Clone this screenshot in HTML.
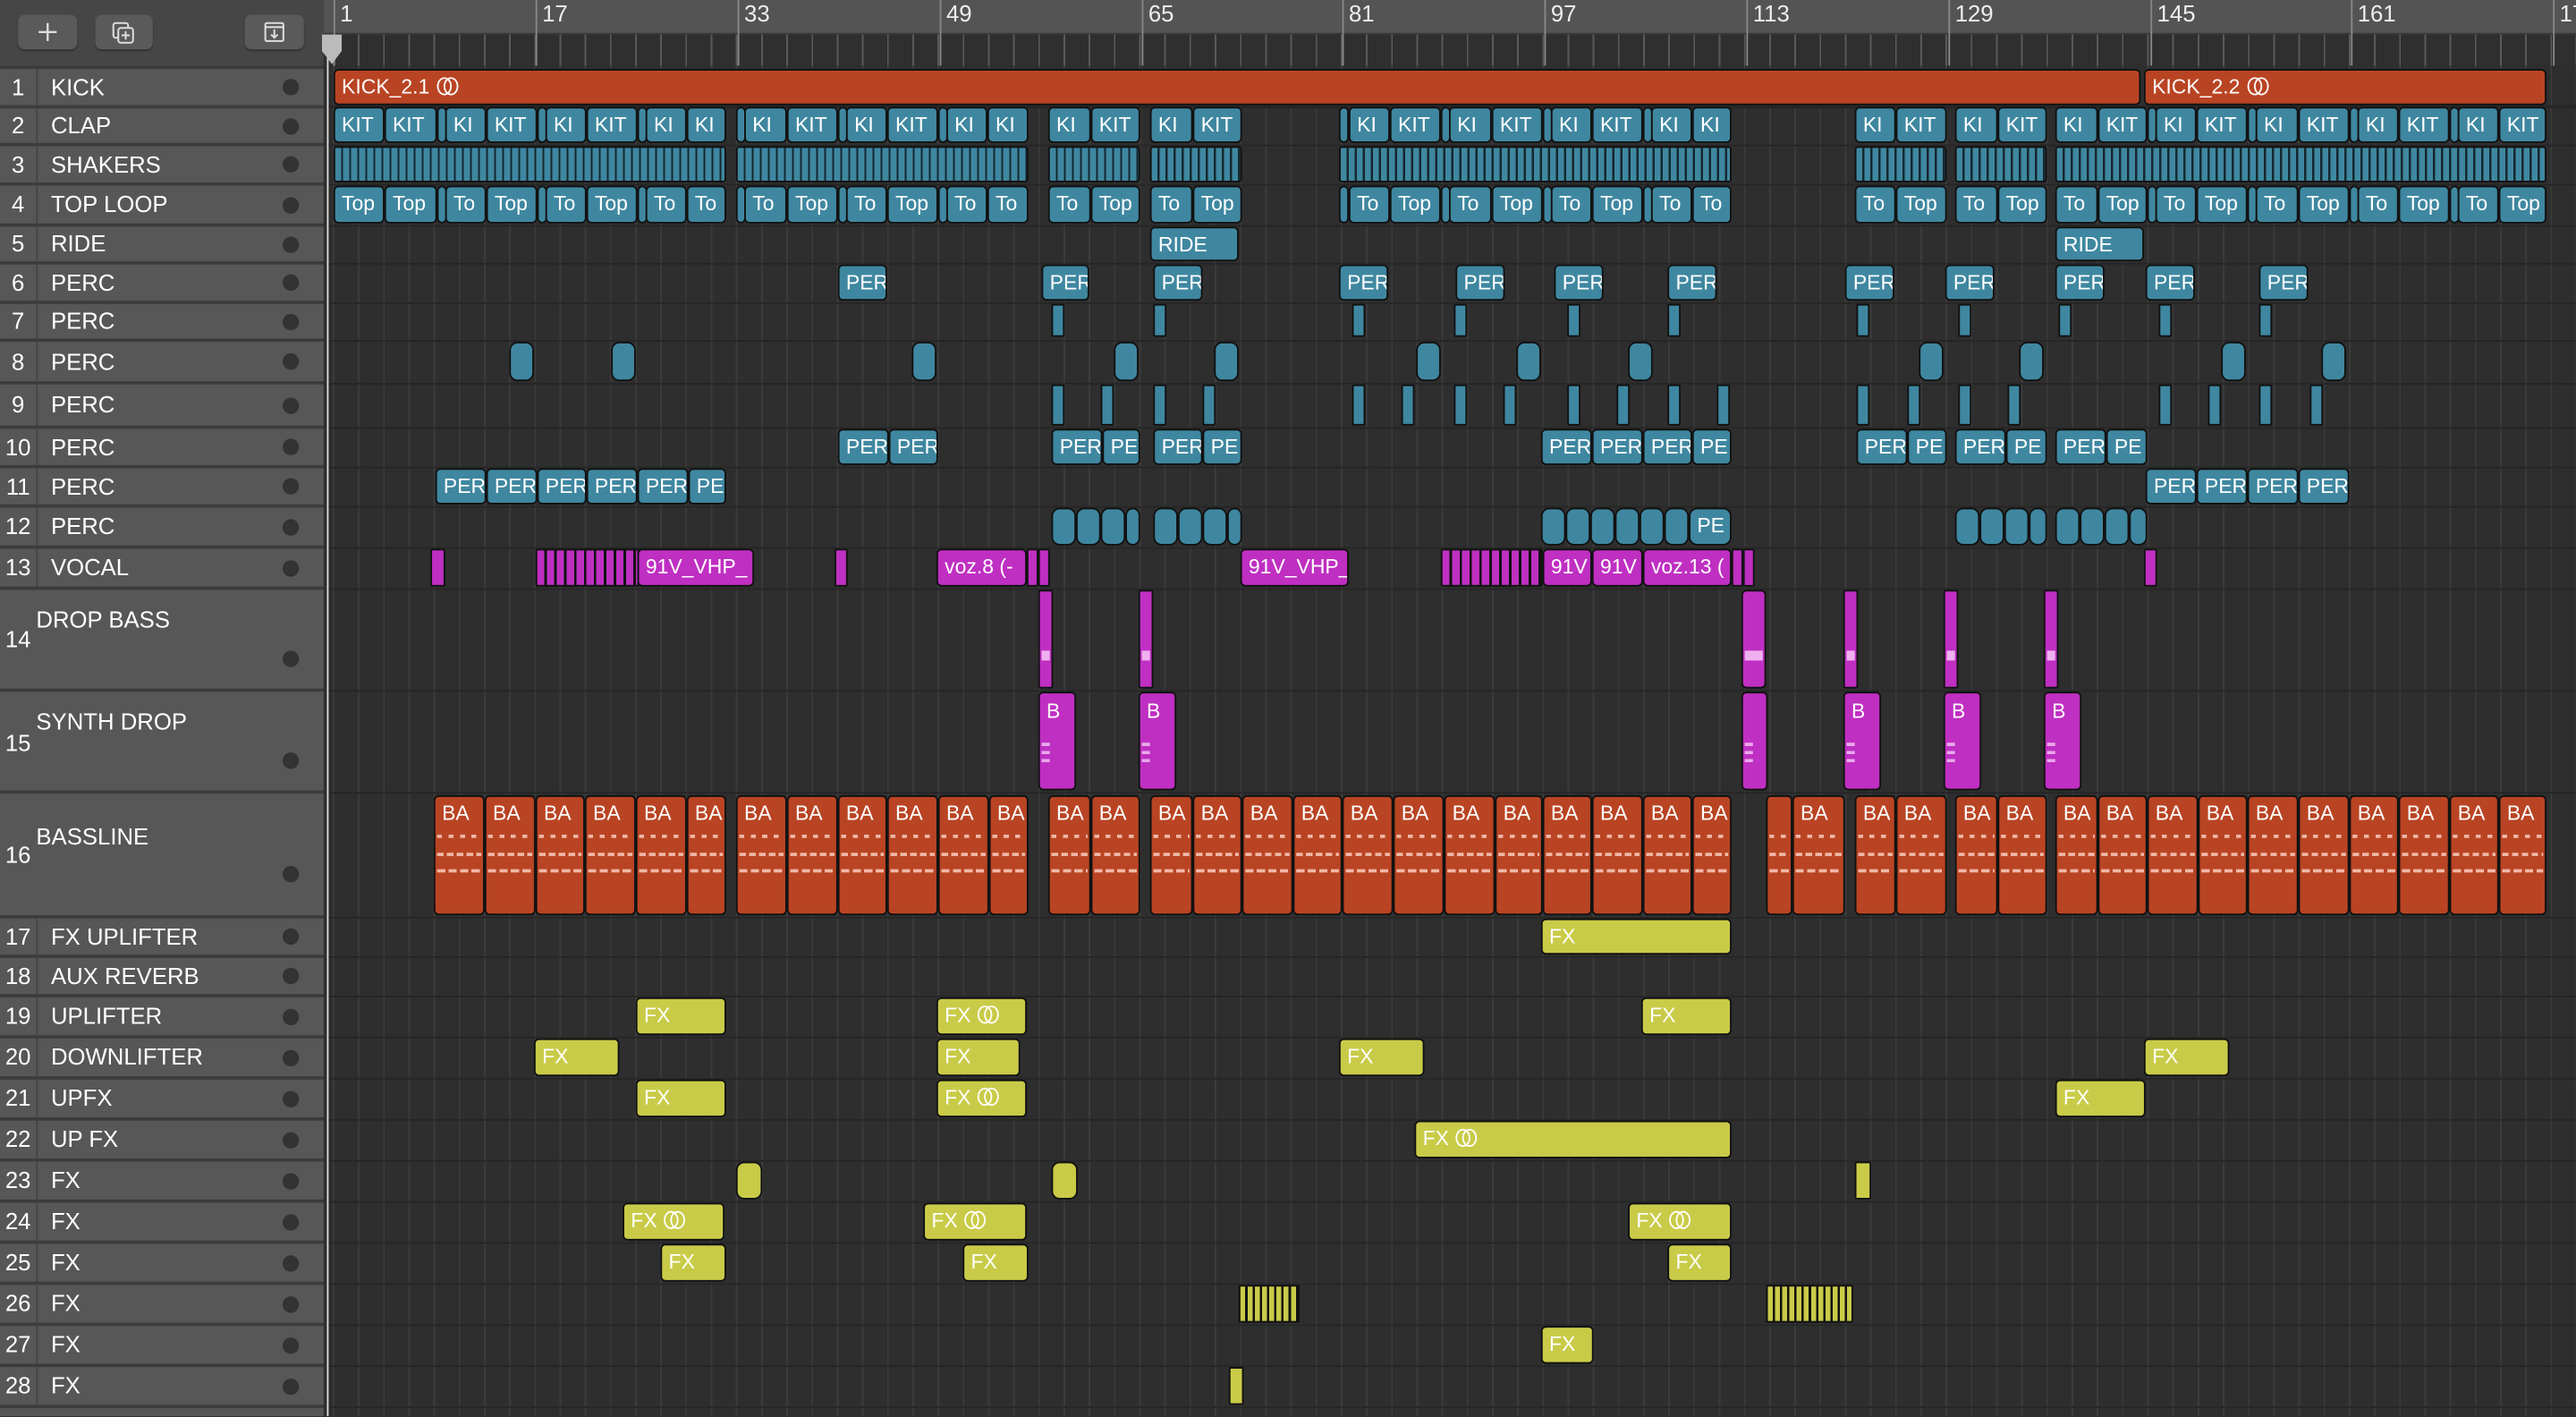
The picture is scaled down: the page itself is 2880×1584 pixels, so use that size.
<!DOCTYPE html>
<html><head><meta charset="utf-8"><style>
html,body{margin:0;padding:0;background:#2e2e2e;overflow:hidden;width:2880px;height:1584px}
#w{position:absolute;left:0;top:0;width:1568px;height:862px;transform:scale(1.83673);transform-origin:0 0;font-family:"Liberation Sans",sans-serif;color:#fff;overflow:hidden}
#hdr{position:absolute;left:0;top:0;width:197px;height:40px;background:#464646;border-bottom:1px solid #3a3a3a}
.btn{position:absolute;top:9px;height:21px;background:#5a5a5a;border-radius:4px;box-shadow:0 1px 1px #333}
#pan{position:absolute;left:0;top:41px;width:197px;height:821px;background:#3c3c3c}
.tr{position:absolute;left:0;width:197px;background:#575757;font-size:14px}
.tr .n{position:absolute;left:0;width:22px;text-align:center;border-right:1.5px solid #444;height:100%}
.tr .nm{position:absolute;left:31px}
.tr .d{position:absolute;left:172px;width:10px;height:10px;border-radius:50%;background:#333}
#ar{position:absolute;left:199px;top:40px;width:1369px;height:822px;background-color:#2e2e2e;background-image:repeating-linear-gradient(90deg,transparent 0 3.5px,#3b3b3b 3.5px 4.5px,transparent 4.5px 15.34px)}
#rul{position:absolute;left:197px;top:0;width:1371px;height:20px;background:#545454;border-bottom:1.5px solid #3a3a3a}
#rul2{position:absolute;left:197px;top:21px;width:1371px;height:19px;background-color:#2f2f2f;background-image:repeating-linear-gradient(90deg,transparent 0 5.5px,#5a5a5a 5.5px 6.5px,transparent 6.5px 15.34px)}
.bn{position:absolute;top:0;height:40px;border-left:1px solid #888;font-size:14px;padding-left:3px;line-height:17px;color:#eee}
.rl{position:absolute;left:199px;width:1369px;height:1.5px;background:#262626}
.r{position:absolute;box-sizing:border-box;border:1px solid #111;border-radius:3px;font-size:12.5px;padding-left:4px;line-height:20px;white-space:nowrap;overflow:hidden}
.b{background:#3f87a0}.o{background:#b94423}.m{background:#bf2fc2}.y{background:#c9cb48}
.st{background-image:repeating-linear-gradient(90deg,#3f87a0 0 3.6px,#152830 3.6px 4.9px)}
.stm{background:repeating-linear-gradient(90deg,#bf2fc2 0 4.4px,#111 4.4px 6px)}
.sty{background:repeating-linear-gradient(90deg,#c9cb48 0 3px,#111 3px 4.4px)}
.t1{top:42px;height:22px}.t2{top:65px;height:22px}.t3{top:89px;height:22px}.t4{top:113px;height:23px}.t5{top:138px;height:21px}.t6{top:161px;height:22px}.t7{top:185px;height:20px}.t8{top:208px;height:24px;border-radius:5px}.t9{top:234px;height:25px}.t10{top:261px;height:22px}.t11{top:285px;height:22px}.t12{top:309px;height:23px;border-radius:5px}.t13{top:334px;height:23px}.t14{top:359px;height:60px}.t15{top:421px;height:60px;line-height:22px}.t16{top:484px;height:73px;line-height:20px}.t17{top:559px;height:22px}.t19{top:607px;height:23px}.t20{top:632px;height:23px}.t21{top:657px;height:23px}.t22{top:682px;height:23px}.t23{top:707px;height:23px}.t24{top:732px;height:23px}.t25{top:757px;height:23px}.t26{top:782px;height:23px}.t27{top:807px;height:23px}.t28{top:832px;height:23px}
.lk{display:inline-block;position:relative;width:14px;height:11px;vertical-align:-1px;margin-left:4px}
.lk::before,.lk::after{content:"";position:absolute;top:0;width:7px;height:9px;border:1.2px solid #fff;border-radius:50%}
.lk::before{left:0}.lk::after{left:4px}
.ba::before,.ba::after{content:"";position:absolute;left:1px;right:1px;height:2px;background:repeating-linear-gradient(90deg,#f0b8a8 0 5px,transparent 5px 7px)}
.ba::before{top:23px;height:1.5px;background:repeating-linear-gradient(90deg,#f0b8a8 0 3px,transparent 3px 7px)}
.ba::after{top:44px}
.ba{background-image:linear-gradient(90deg,transparent 1px,transparent 1px);}
.ba span{position:absolute;left:1px;right:1px;top:34px;height:2px;background:repeating-linear-gradient(90deg,#f0b8a8 0 4px,transparent 4px 6px)}
.pk::after{content:"";position:absolute;left:1px;right:1px;top:36px;height:6px;background:#f0b0f0}
.bd::after{content:"";position:absolute;left:1px;width:5px;top:30px;height:14px;background:repeating-linear-gradient(#e8a8ea 0 2px,transparent 2px 5px)}
</style></head><body><div id="w">
<div id="hdr">
<div class="btn" style="left:11px;width:36px"><svg width="36" height="21"><path d="M18 5v11M12.5 10.5h11" stroke="#ddd" stroke-width="1.3"/></svg></div>
<div class="btn" style="left:58px;width:35px"><svg width="35" height="21"><rect x="11" y="5" width="9" height="9" rx="1.5" fill="none" stroke="#ddd" stroke-width="1.1"/><rect x="14" y="8" width="9" height="9" rx="1.5" fill="#5a5a5a" stroke="#ddd" stroke-width="1.1"/><path d="M18.5 10v5M16 12.5h5" stroke="#ddd" stroke-width="1.1"/></svg></div>
<div class="btn" style="left:149px;width:36px"><svg width="36" height="21"><rect x="12.5" y="5" width="11" height="11" rx="1" fill="none" stroke="#ddd" stroke-width="1.1"/><path d="M12.5 7.5h11M18 9v5M16 12l2 2 2-2" fill="none" stroke="#ddd" stroke-width="1.1"/></svg></div>
</div>
<div id="rul"></div><div id="rul2"></div>
<div class="bn" style="left:203px">1</div><div class="bn" style="left:326px">17</div><div class="bn" style="left:449px">33</div><div class="bn" style="left:572px">49</div><div class="bn" style="left:695px">65</div><div class="bn" style="left:817px">81</div><div class="bn" style="left:940px">97</div><div class="bn" style="left:1063px">113</div><div class="bn" style="left:1186px">129</div><div class="bn" style="left:1309px">145</div><div class="bn" style="left:1431px">161</div><div class="bn" style="left:1554px">17</div>
<div id="pan"></div>
<div class="tr" style="top:42px;height:22px;line-height:22px"><span class="n">1</span><span class="nm">KICK</span><span class="d" style="top:6px"></span></div>
<div class="tr" style="top:66px;height:21px;line-height:21px"><span class="n">2</span><span class="nm">CLAP</span><span class="d" style="top:6px"></span></div>
<div class="tr" style="top:89px;height:22px;line-height:22px"><span class="n">3</span><span class="nm">SHAKERS</span><span class="d" style="top:6px"></span></div>
<div class="tr" style="top:113px;height:23px;line-height:23px"><span class="n">4</span><span class="nm">TOP LOOP</span><span class="d" style="top:7px"></span></div>
<div class="tr" style="top:138px;height:21px;line-height:21px"><span class="n">5</span><span class="nm">RIDE</span><span class="d" style="top:6px"></span></div>
<div class="tr" style="top:161px;height:22px;line-height:22px"><span class="n">6</span><span class="nm">PERC</span><span class="d" style="top:6px"></span></div>
<div class="tr" style="top:185px;height:21px;line-height:21px"><span class="n">7</span><span class="nm">PERC</span><span class="d" style="top:6px"></span></div>
<div class="tr" style="top:208px;height:24px;line-height:24px"><span class="n">8</span><span class="nm">PERC</span><span class="d" style="top:7px"></span></div>
<div class="tr" style="top:234px;height:25px;line-height:25px"><span class="n">9</span><span class="nm">PERC</span><span class="d" style="top:8px"></span></div>
<div class="tr" style="top:261px;height:22px;line-height:22px"><span class="n">10</span><span class="nm">PERC</span><span class="d" style="top:6px"></span></div>
<div class="tr" style="top:285px;height:22px;line-height:22px"><span class="n">11</span><span class="nm">PERC</span><span class="d" style="top:6px"></span></div>
<div class="tr" style="top:309px;height:23px;line-height:23px"><span class="n">12</span><span class="nm">PERC</span><span class="d" style="top:7px"></span></div>
<div class="tr" style="top:334px;height:23px;line-height:23px"><span class="n">13</span><span class="nm">VOCAL</span><span class="d" style="top:7px"></span></div>
<div class="tr" style="top:359px;height:60px"><span class="n" style="line-height:60px;border:0">14</span><span class="nm" style="left:22px;top:10px">DROP BASS</span><span class="d" style="top:37px"></span></div>
<div class="tr" style="top:421px;height:60px"><span class="n" style="line-height:62px;border:0">15</span><span class="nm" style="left:22px;top:10px">SYNTH DROP</span><span class="d" style="top:37px"></span></div>
<div class="tr" style="top:483px;height:74px"><span class="n" style="line-height:74px;border:0">16</span><span class="nm" style="left:22px;top:18px">BASSLINE</span><span class="d" style="top:44px"></span></div>
<div class="tr" style="top:559px;height:22px;line-height:22px"><span class="n">17</span><span class="nm">FX UPLIFTER</span><span class="d" style="top:6px"></span></div>
<div class="tr" style="top:583px;height:22px;line-height:22px"><span class="n">18</span><span class="nm">AUX REVERB</span><span class="d" style="top:6px"></span></div>
<div class="tr" style="top:607px;height:23px;line-height:23px"><span class="n">19</span><span class="nm">UPLIFTER</span><span class="d" style="top:7px"></span></div>
<div class="tr" style="top:632px;height:23px;line-height:23px"><span class="n">20</span><span class="nm">DOWNLIFTER</span><span class="d" style="top:7px"></span></div>
<div class="tr" style="top:657px;height:23px;line-height:23px"><span class="n">21</span><span class="nm">UPFX</span><span class="d" style="top:7px"></span></div>
<div class="tr" style="top:682px;height:23px;line-height:23px"><span class="n">22</span><span class="nm">UP FX</span><span class="d" style="top:7px"></span></div>
<div class="tr" style="top:707px;height:23px;line-height:23px"><span class="n">23</span><span class="nm">FX</span><span class="d" style="top:7px"></span></div>
<div class="tr" style="top:732px;height:23px;line-height:23px"><span class="n">24</span><span class="nm">FX</span><span class="d" style="top:7px"></span></div>
<div class="tr" style="top:757px;height:23px;line-height:23px"><span class="n">25</span><span class="nm">FX</span><span class="d" style="top:7px"></span></div>
<div class="tr" style="top:782px;height:23px;line-height:23px"><span class="n">26</span><span class="nm">FX</span><span class="d" style="top:7px"></span></div>
<div class="tr" style="top:807px;height:23px;line-height:23px"><span class="n">27</span><span class="nm">FX</span><span class="d" style="top:7px"></span></div>
<div class="tr" style="top:832px;height:23px;line-height:23px"><span class="n">28</span><span class="nm">FX</span><span class="d" style="top:7px"></span></div>
<div class="tr" style="top:857px;height:5px"></div>
<div id="ar"></div>
<div class="rl" style="top:64px"></div><div class="rl" style="top:87.5px"></div><div class="rl" style="top:111.5px"></div><div class="rl" style="top:136.5px"></div><div class="rl" style="top:159.5px"></div><div class="rl" style="top:183.5px"></div><div class="rl" style="top:206.5px"></div><div class="rl" style="top:232.5px"></div><div class="rl" style="top:259.5px"></div><div class="rl" style="top:283.5px"></div><div class="rl" style="top:307.5px"></div><div class="rl" style="top:332.5px"></div><div class="rl" style="top:357.5px"></div><div class="rl" style="top:419.5px"></div><div class="rl" style="top:481.5px"></div><div class="rl" style="top:557.5px"></div><div class="rl" style="top:581.5px"></div><div class="rl" style="top:605.5px"></div><div class="rl" style="top:630.5px"></div><div class="rl" style="top:655.5px"></div><div class="rl" style="top:680.5px"></div><div class="rl" style="top:705.5px"></div><div class="rl" style="top:730.5px"></div><div class="rl" style="top:755.5px"></div><div class="rl" style="top:780.5px"></div><div class="rl" style="top:805.5px"></div><div class="rl" style="top:830.5px"></div><div class="rl" style="top:855.5px"></div>
<div style="position:absolute;left:199px;top:22px;width:1px;height:840px;background:#ddd"></div>
<svg style="position:absolute;left:195px;top:20px" width="16" height="20"><path d="M1 1h12v10l-6 8-6-8z" fill="#bbb"/></svg>

<div class="r o t1" style="left:203px;width:1100px">KICK_2.1<span class="lk"></span></div>
<div class="r o t1" style="left:1305px;width:245px">KICK_2.2<span class="lk"></span></div>

<div class="r b t2" style="left:203px;width:31px">KIT</div><div class="r b t2" style="left:234px;width:32px">KIT</div><div class="r b t2" style="left:266px;width:6px"></div><div class="r b t2" style="left:271px;width:25px">KI</div><div class="r b t2" style="left:296px;width:31px">KIT</div><div class="r b t2" style="left:327px;width:6px"></div><div class="r b t2" style="left:332px;width:25px">KI</div><div class="r b t2" style="left:357px;width:31px">KIT</div><div class="r b t2" style="left:388px;width:6px"></div><div class="r b t2" style="left:393px;width:25px">KI</div><div class="r b t2" style="left:418px;width:24px">KI</div>
<div class="r b t2" style="left:448px;width:6px"></div><div class="r b t2" style="left:453px;width:26px">KI</div><div class="r b t2" style="left:479px;width:31px">KIT</div><div class="r b t2" style="left:510px;width:6px"></div><div class="r b t2" style="left:515px;width:25px">KI</div><div class="r b t2" style="left:540px;width:31px">KIT</div><div class="r b t2" style="left:571px;width:6px"></div><div class="r b t2" style="left:576px;width:25px">KI</div><div class="r b t2" style="left:601px;width:25px">KI</div>
<div class="r b t2" style="left:638px;width:26px">KI</div><div class="r b t2" style="left:664px;width:30px">KIT</div>
<div class="r b t2" style="left:700px;width:26px">KI</div><div class="r b t2" style="left:726px;width:30px">KIT</div>
<div class="r b t2" style="left:815px;width:6px"></div><div class="r b t2" style="left:821px;width:25px">KI</div><div class="r b t2" style="left:846px;width:31px">KIT</div><div class="r b t2" style="left:877px;width:6px"></div><div class="r b t2" style="left:882px;width:26px">KI</div><div class="r b t2" style="left:908px;width:31px">KIT</div><div class="r b t2" style="left:939px;width:6px"></div><div class="r b t2" style="left:944px;width:25px">KI</div><div class="r b t2" style="left:969px;width:31px">KIT</div><div class="r b t2" style="left:1000px;width:6px"></div><div class="r b t2" style="left:1005px;width:25px">KI</div><div class="r b t2" style="left:1030px;width:24px">KI</div>
<div class="r b t2" style="left:1129px;width:25px">KI</div><div class="r b t2" style="left:1154px;width:31px">KIT</div>
<div class="r b t2" style="left:1190px;width:26px">KI</div><div class="r b t2" style="left:1216px;width:30px">KIT</div>
<div class="r b t2" style="left:1251px;width:26px">KI</div><div class="r b t2" style="left:1277px;width:30px">KIT</div><div class="r b t2" style="left:1307px;width:6px"></div><div class="r b t2" style="left:1312px;width:25px">KI</div><div class="r b t2" style="left:1337px;width:31px">KIT</div><div class="r b t2" style="left:1368px;width:6px"></div><div class="r b t2" style="left:1373px;width:26px">KI</div><div class="r b t2" style="left:1399px;width:31px">KIT</div><div class="r b t2" style="left:1430px;width:6px"></div><div class="r b t2" style="left:1435px;width:25px">KI</div><div class="r b t2" style="left:1460px;width:31px">KIT</div><div class="r b t2" style="left:1491px;width:6px"></div><div class="r b t2" style="left:1496px;width:25px">KI</div><div class="r b t2" style="left:1521px;width:29px">KIT</div>

<div class="r st t3" style="left:203px;width:239px;border-radius:2px"></div><div class="r st t3" style="left:448px;width:178px;border-radius:2px"></div><div class="r st t3" style="left:638px;width:56px;border-radius:2px"></div><div class="r st t3" style="left:700px;width:56px;border-radius:2px"></div><div class="r st t3" style="left:815px;width:239px;border-radius:2px"></div><div class="r st t3" style="left:1129px;width:56px;border-radius:2px"></div><div class="r st t3" style="left:1190px;width:56px;border-radius:2px"></div><div class="r st t3" style="left:1251px;width:299px;border-radius:2px"></div>

<div class="r b t4" style="left:203px;width:31px">Top</div><div class="r b t4" style="left:234px;width:32px">Top</div><div class="r b t4" style="left:266px;width:6px"></div><div class="r b t4" style="left:271px;width:25px">To</div><div class="r b t4" style="left:296px;width:31px">Top</div><div class="r b t4" style="left:327px;width:6px"></div><div class="r b t4" style="left:332px;width:25px">To</div><div class="r b t4" style="left:357px;width:31px">Top</div><div class="r b t4" style="left:388px;width:6px"></div><div class="r b t4" style="left:393px;width:25px">To</div><div class="r b t4" style="left:418px;width:24px">To</div>
<div class="r b t4" style="left:448px;width:6px"></div><div class="r b t4" style="left:453px;width:26px">To</div><div class="r b t4" style="left:479px;width:31px">Top</div><div class="r b t4" style="left:510px;width:6px"></div><div class="r b t4" style="left:515px;width:25px">To</div><div class="r b t4" style="left:540px;width:31px">Top</div><div class="r b t4" style="left:571px;width:6px"></div><div class="r b t4" style="left:576px;width:25px">To</div><div class="r b t4" style="left:601px;width:25px">To</div>
<div class="r b t4" style="left:638px;width:26px">To</div><div class="r b t4" style="left:664px;width:30px">Top</div>
<div class="r b t4" style="left:700px;width:26px">To</div><div class="r b t4" style="left:726px;width:30px">Top</div>
<div class="r b t4" style="left:815px;width:6px"></div><div class="r b t4" style="left:821px;width:25px">To</div><div class="r b t4" style="left:846px;width:31px">Top</div><div class="r b t4" style="left:877px;width:6px"></div><div class="r b t4" style="left:882px;width:26px">To</div><div class="r b t4" style="left:908px;width:31px">Top</div><div class="r b t4" style="left:939px;width:6px"></div><div class="r b t4" style="left:944px;width:25px">To</div><div class="r b t4" style="left:969px;width:31px">Top</div><div class="r b t4" style="left:1000px;width:6px"></div><div class="r b t4" style="left:1005px;width:25px">To</div><div class="r b t4" style="left:1030px;width:24px">To</div>
<div class="r b t4" style="left:1129px;width:25px">To</div><div class="r b t4" style="left:1154px;width:31px">Top</div>
<div class="r b t4" style="left:1190px;width:26px">To</div><div class="r b t4" style="left:1216px;width:30px">Top</div>
<div class="r b t4" style="left:1251px;width:26px">To</div><div class="r b t4" style="left:1277px;width:30px">Top</div><div class="r b t4" style="left:1307px;width:6px"></div><div class="r b t4" style="left:1312px;width:25px">To</div><div class="r b t4" style="left:1337px;width:31px">Top</div><div class="r b t4" style="left:1368px;width:6px"></div><div class="r b t4" style="left:1373px;width:26px">To</div><div class="r b t4" style="left:1399px;width:31px">Top</div><div class="r b t4" style="left:1430px;width:6px"></div><div class="r b t4" style="left:1435px;width:25px">To</div><div class="r b t4" style="left:1460px;width:31px">Top</div><div class="r b t4" style="left:1491px;width:6px"></div><div class="r b t4" style="left:1496px;width:25px">To</div><div class="r b t4" style="left:1521px;width:29px">Top</div>

<div class="r b t5" style="left:700px;width:54px">RIDE</div><div class="r b t5" style="left:1251px;width:54px">RIDE</div>

<div class="r b t6" style="left:510px;width:30px">PER</div><div class="r b t6" style="left:634px;width:29px">PER</div><div class="r b t6" style="left:702px;width:30px">PER</div><div class="r b t6" style="left:815px;width:30px">PER</div><div class="r b t6" style="left:886px;width:30px">PER</div><div class="r b t6" style="left:946px;width:30px">PER</div><div class="r b t6" style="left:1015px;width:30px">PER</div><div class="r b t6" style="left:1123px;width:30px">PER</div><div class="r b t6" style="left:1184px;width:30px">PER</div><div class="r b t6" style="left:1251px;width:30px">PER</div><div class="r b t6" style="left:1306px;width:30px">PER</div><div class="r b t6" style="left:1375px;width:30px">PER</div>

<div class="r b t7" style="left:640px;width:8px;border-radius:1px"></div><div class="r b t7" style="left:702px;width:8px;border-radius:1px"></div><div class="r b t7" style="left:823px;width:8px;border-radius:1px"></div><div class="r b t7" style="left:885px;width:8px;border-radius:1px"></div><div class="r b t7" style="left:954px;width:8px;border-radius:1px"></div><div class="r b t7" style="left:1015px;width:8px;border-radius:1px"></div><div class="r b t7" style="left:1130px;width:8px;border-radius:1px"></div><div class="r b t7" style="left:1192px;width:8px;border-radius:1px"></div><div class="r b t7" style="left:1253px;width:8px;border-radius:1px"></div><div class="r b t7" style="left:1314px;width:8px;border-radius:1px"></div><div class="r b t7" style="left:1375px;width:8px;border-radius:1px"></div>

<div class="r b t8" style="left:310px;width:15px"></div><div class="r b t8" style="left:372px;width:15px"></div><div class="r b t8" style="left:555px;width:15px"></div><div class="r b t8" style="left:678px;width:15px"></div><div class="r b t8" style="left:739px;width:15px"></div><div class="r b t8" style="left:862px;width:15px"></div><div class="r b t8" style="left:923px;width:15px"></div><div class="r b t8" style="left:991px;width:15px"></div><div class="r b t8" style="left:1168px;width:15px"></div><div class="r b t8" style="left:1229px;width:15px"></div><div class="r b t8" style="left:1352px;width:15px"></div><div class="r b t8" style="left:1413px;width:15px"></div>

<div class="r b t9" style="left:640px;width:8px;border-radius:1px"></div><div class="r b t9" style="left:670px;width:8px;border-radius:1px"></div><div class="r b t9" style="left:702px;width:8px;border-radius:1px"></div><div class="r b t9" style="left:732px;width:8px;border-radius:1px"></div><div class="r b t9" style="left:823px;width:8px;border-radius:1px"></div><div class="r b t9" style="left:853px;width:8px;border-radius:1px"></div><div class="r b t9" style="left:885px;width:8px;border-radius:1px"></div><div class="r b t9" style="left:915px;width:8px;border-radius:1px"></div><div class="r b t9" style="left:954px;width:8px;border-radius:1px"></div><div class="r b t9" style="left:984px;width:8px;border-radius:1px"></div><div class="r b t9" style="left:1015px;width:8px;border-radius:1px"></div><div class="r b t9" style="left:1045px;width:8px;border-radius:1px"></div><div class="r b t9" style="left:1130px;width:8px;border-radius:1px"></div><div class="r b t9" style="left:1161px;width:8px;border-radius:1px"></div><div class="r b t9" style="left:1192px;width:8px;border-radius:1px"></div><div class="r b t9" style="left:1222px;width:8px;border-radius:1px"></div><div class="r b t9" style="left:1314px;width:8px;border-radius:1px"></div><div class="r b t9" style="left:1344px;width:8px;border-radius:1px"></div><div class="r b t9" style="left:1375px;width:8px;border-radius:1px"></div><div class="r b t9" style="left:1406px;width:8px;border-radius:1px"></div>

<div class="r b t10" style="left:510px;width:31px">PER</div><div class="r b t10" style="left:541px;width:30px">PER</div><div class="r b t10" style="left:640px;width:31px">PER</div><div class="r b t10" style="left:671px;width:23px">PE</div><div class="r b t10" style="left:702px;width:30px">PER</div><div class="r b t10" style="left:732px;width:24px">PE</div><div class="r b t10" style="left:938px;width:31px">PER</div><div class="r b t10" style="left:969px;width:31px">PER</div><div class="r b t10" style="left:1000px;width:30px">PER</div><div class="r b t10" style="left:1030px;width:24px">PE</div><div class="r b t10" style="left:1130px;width:31px">PER</div><div class="r b t10" style="left:1161px;width:24px">PE</div><div class="r b t10" style="left:1190px;width:31px">PER</div><div class="r b t10" style="left:1221px;width:25px">PE</div><div class="r b t10" style="left:1251px;width:31px">PER</div><div class="r b t10" style="left:1282px;width:25px">PE</div>

<div class="r b t11" style="left:265px;width:31px">PER</div><div class="r b t11" style="left:296px;width:31px">PER</div><div class="r b t11" style="left:327px;width:30px">PER</div><div class="r b t11" style="left:357px;width:31px">PER</div><div class="r b t11" style="left:388px;width:31px">PER</div><div class="r b t11" style="left:419px;width:23px">PE</div><div class="r b t11" style="left:1306px;width:31px">PER</div><div class="r b t11" style="left:1337px;width:31px">PER</div><div class="r b t11" style="left:1368px;width:31px">PER</div><div class="r b t11" style="left:1399px;width:31px">PER</div>

<div class="r b t12" style="left:640px;width:15px"></div><div class="r b t12" style="left:655px;width:15px"></div><div class="r b t12" style="left:670px;width:15px"></div><div class="r b t12" style="left:685px;width:9px"></div><div class="r b t12" style="left:702px;width:15px"></div><div class="r b t12" style="left:717px;width:15px"></div><div class="r b t12" style="left:732px;width:15px"></div><div class="r b t12" style="left:747px;width:9px"></div><div class="r b t12" style="left:938px;width:15px"></div><div class="r b t12" style="left:953px;width:15px"></div><div class="r b t12" style="left:968px;width:15px"></div><div class="r b t12" style="left:983px;width:15px"></div><div class="r b t12" style="left:998px;width:15px"></div><div class="r b t12" style="left:1013px;width:15px"></div><div class="r b t12" style="left:1028px;width:26px;line-height:21px">PE</div><div class="r b t12" style="left:1190px;width:15px"></div><div class="r b t12" style="left:1205px;width:15px"></div><div class="r b t12" style="left:1220px;width:15px"></div><div class="r b t12" style="left:1235px;width:11px"></div><div class="r b t12" style="left:1251px;width:15px"></div><div class="r b t12" style="left:1266px;width:15px"></div><div class="r b t12" style="left:1281px;width:15px"></div><div class="r b t12" style="left:1296px;width:11px"></div>

<div class="r m t13" style="left:262px;width:9px;border-radius:1px"></div><div class="r stm t13" style="left:326px;width:63px;border-radius:1px"></div><div class="r m t13" style="left:388px;width:71px">91V_VHP_</div><div class="r m t13" style="left:508px;width:8px;border-radius:1px"></div><div class="r m t13" style="left:570px;width:55px">voz.8 (-</div><div class="r m t13" style="left:625px;width:7px;border-radius:1px"></div><div class="r m t13" style="left:632px;width:7px;border-radius:1px"></div><div class="r m t13" style="left:755px;width:66px">91V_VHP_</div><div class="r stm t13" style="left:877px;width:62px;border-radius:1px"></div><div class="r m t13" style="left:939px;width:30px">91V</div><div class="r m t13" style="left:969px;width:31px">91V</div><div class="r m t13" style="left:1000px;width:54px">voz.13 (</div><div class="r m t13" style="left:1054px;width:7px;border-radius:1px"></div><div class="r m t13" style="left:1061px;width:7px;border-radius:1px"></div><div class="r m t13" style="left:1305px;width:8px;border-radius:1px"></div>

<div class="r m t14 pk" style="left:632px;width:9px;border-radius:1px"></div><div class="r m t14 pk" style="left:693px;width:9px;border-radius:1px"></div><div class="r m t14 pk" style="left:1060px;width:15px"></div><div class="r m t14 pk" style="left:1122px;width:9px;border-radius:1px"></div><div class="r m t14 pk" style="left:1183px;width:9px;border-radius:1px"></div><div class="r m t14 pk" style="left:1244px;width:9px;border-radius:1px"></div>

<div class="r m t15 bd" style="left:632px;width:23px">B</div><div class="r m t15 bd" style="left:693px;width:23px">B</div><div class="r m t15 bd" style="left:1060px;width:16px"></div><div class="r m t15 bd" style="left:1122px;width:23px">B</div><div class="r m t15 bd" style="left:1183px;width:23px">B</div><div class="r m t15 bd" style="left:1244px;width:23px">B</div>

<div class="r o t16 ba" style="left:264px;width:31px">BA<span></span></div><div class="r o t16 ba" style="left:295px;width:31px">BA<span></span></div><div class="r o t16 ba" style="left:326px;width:30px">BA<span></span></div><div class="r o t16 ba" style="left:356px;width:31px">BA<span></span></div><div class="r o t16 ba" style="left:387px;width:31px">BA<span></span></div><div class="r o t16 ba" style="left:418px;width:24px">BA<span></span></div>
<div class="r o t16 ba" style="left:448px;width:31px">BA<span></span></div><div class="r o t16 ba" style="left:479px;width:31px">BA<span></span></div><div class="r o t16 ba" style="left:510px;width:30px">BA<span></span></div><div class="r o t16 ba" style="left:540px;width:31px">BA<span></span></div><div class="r o t16 ba" style="left:571px;width:31px">BA<span></span></div><div class="r o t16 ba" style="left:602px;width:24px">BA<span></span></div>
<div class="r o t16 ba" style="left:638px;width:26px">BA<span></span></div><div class="r o t16 ba" style="left:664px;width:30px">BA<span></span></div>
<div class="r o t16 ba" style="left:700px;width:26px">BA<span></span></div><div class="r o t16 ba" style="left:726px;width:30px">BA<span></span></div><div class="r o t16 ba" style="left:756px;width:31px">BA<span></span></div><div class="r o t16 ba" style="left:787px;width:30px">BA<span></span></div><div class="r o t16 ba" style="left:817px;width:31px">BA<span></span></div><div class="r o t16 ba" style="left:848px;width:31px">BA<span></span></div><div class="r o t16 ba" style="left:879px;width:31px">BA<span></span></div><div class="r o t16 ba" style="left:910px;width:29px">BA<span></span></div><div class="r o t16 ba" style="left:939px;width:30px">BA<span></span></div><div class="r o t16 ba" style="left:969px;width:31px">BA<span></span></div><div class="r o t16 ba" style="left:1000px;width:30px">BA<span></span></div><div class="r o t16 ba" style="left:1030px;width:24px">BA<span></span></div>
<div class="r o t16 ba" style="left:1075px;width:16px"><span></span></div><div class="r o t16 ba" style="left:1091px;width:32px">BA<span></span></div>
<div class="r o t16 ba" style="left:1129px;width:25px">BA<span></span></div><div class="r o t16 ba" style="left:1154px;width:31px">BA<span></span></div>
<div class="r o t16 ba" style="left:1190px;width:26px">BA<span></span></div><div class="r o t16 ba" style="left:1216px;width:30px">BA<span></span></div>
<div class="r o t16 ba" style="left:1251px;width:26px">BA<span></span></div><div class="r o t16 ba" style="left:1277px;width:30px">BA<span></span></div><div class="r o t16 ba" style="left:1307px;width:31px">BA<span></span></div><div class="r o t16 ba" style="left:1338px;width:30px">BA<span></span></div><div class="r o t16 ba" style="left:1368px;width:31px">BA<span></span></div><div class="r o t16 ba" style="left:1399px;width:31px">BA<span></span></div><div class="r o t16 ba" style="left:1430px;width:30px">BA<span></span></div><div class="r o t16 ba" style="left:1460px;width:31px">BA<span></span></div><div class="r o t16 ba" style="left:1491px;width:30px">BA<span></span></div><div class="r o t16 ba" style="left:1521px;width:29px">BA<span></span></div>

<div class="r y t17" style="left:938px;width:116px">FX</div>
<div class="r y t19" style="left:387px;width:55px">FX</div><div class="r y t19" style="left:570px;width:55px">FX<span class="lk"></span></div><div class="r y t19" style="left:999px;width:55px">FX</div>
<div class="r y t20" style="left:325px;width:52px">FX</div><div class="r y t20" style="left:570px;width:51px">FX</div><div class="r y t20" style="left:815px;width:52px">FX</div><div class="r y t20" style="left:1305px;width:52px">FX</div>
<div class="r y t21" style="left:387px;width:55px">FX</div><div class="r y t21" style="left:570px;width:55px">FX<span class="lk"></span></div><div class="r y t21" style="left:1251px;width:55px">FX</div>
<div class="r y t22" style="left:861px;width:193px">FX<span class="lk"></span></div>
<div class="r y t23" style="left:448px;width:16px;border-radius:5px"></div><div class="r y t23" style="left:640px;width:16px;border-radius:5px"></div><div class="r y t23" style="left:1129px;width:10px;border-radius:1px"></div>
<div class="r y t24" style="left:379px;width:62px">FX<span class="lk"></span></div><div class="r y t24" style="left:562px;width:63px">FX<span class="lk"></span></div><div class="r y t24" style="left:991px;width:63px">FX<span class="lk"></span></div>
<div class="r y t25" style="left:402px;width:40px">FX</div><div class="r y t25" style="left:586px;width:40px">FX</div><div class="r y t25" style="left:1015px;width:39px">FX</div>
<div class="r sty t26" style="left:754px;width:37px;border-radius:1px"></div><div class="r sty t26" style="left:1075px;width:53px;border-radius:1px"></div>
<div class="r y t27" style="left:938px;width:32px">FX</div>
<div class="r y t28" style="left:748px;width:9px;border-radius:1px"></div>
</div></body></html>
